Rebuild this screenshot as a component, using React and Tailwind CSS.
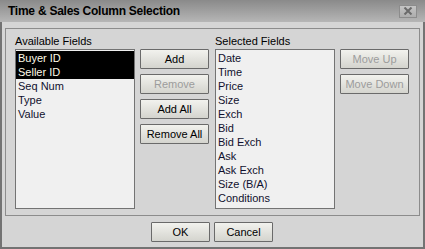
const available = ['Buyer ID', 'Seller ID', 'Seq Num', 'Type', 'Value']
const picked = ['Buyer ID', 'Seller ID']
const selected = ['Date', 'Time', 'Price', 'Size', 'Exch', 'Bid', 'Bid Exch', 'Ask', 'Ask Exch', 'Size (B/A)', 'Conditions']

function Btn({ children, disabled, className = '' }) {
  return (
    <button
      className={`h-[20px] border border-[#6a6a6a] rounded-[1px] bg-gradient-to-b from-[#f2f2ee] to-[#d4d4ce] text-[11px] leading-none ${disabled ? 'text-[#9c9c9c]' : 'text-black'} ${className}`}
    >
      {children}
    </button>
  )
}

function FieldList({ items, highlight = [] }) {
  return (
    <div className="w-[120px] h-[160px] border border-[#737373] bg-[#f0f0f0] pt-px">
      {items.map((item) => {
        const on = highlight.includes(item)
        return (
          <div
            key={item}
            className={`h-[14px] pl-[2px] text-[11px] leading-[14px] ${on ? 'bg-black text-[#fffbe8]' : 'text-[#10102e]'}`}
          >
            {item}
          </div>
        )
      })}
    </div>
  )
}

export default function App() {
  return (
    <div className="w-[425px] h-[249px] bg-[#d5d5d5] border-x-2 border-b-2 border-[#737373] flex flex-col font-['Liberation_Sans',Arial,sans-serif] select-none">
      {/* Title bar */}
      <div className="h-[22px] -mx-[2px] shrink-0 bg-gradient-to-b from-[#8a8a8a] to-[#b6b6b6] flex items-center justify-between pl-[8px] pr-[8px]">
        <span className="text-[12px] font-bold tracking-[-0.25px] text-black">Time &amp; Sales Column Selection</span>
        <div className="w-[18px] h-[13px] border border-[#8c8c8c] bg-gradient-to-b from-[#c4c4c4] to-[#adadad] flex items-center justify-center">
          <svg width="10" height="8" viewBox="0 0 10 8">
            <path d="M1.5 0.5 L8.5 7.5 M8.5 0.5 L1.5 7.5" stroke="#6a6a6a" strokeWidth="2" />
          </svg>
        </div>
      </div>

      {/* Group box */}
      <div className="mx-[3px] mt-[6px] h-[188px] border border-[#8c8c8c] pl-[9px] pt-[7px] flex gap-[5px]">
        <div className="flex flex-col">
          <div className="h-[13px] text-[11px] leading-[11px] text-black">Available Fields</div>
          <FieldList items={available} highlight={picked} />
        </div>
        <div className="pt-[13px] flex flex-col gap-[5px] w-[69px]">
          <Btn>Add</Btn>
          <Btn disabled>Remove</Btn>
          <Btn>Add All</Btn>
          <Btn>Remove All</Btn>
        </div>
        <div className="flex flex-col ml-px">
          <div className="h-[13px] text-[11px] leading-[11px] text-black">Selected Fields</div>
          <FieldList items={selected} />
        </div>
        <div className="pt-[13px] flex flex-col gap-[5px] w-[69px]">
          <Btn disabled>Move Up</Btn>
          <Btn disabled>Move Down</Btn>
        </div>
      </div>

      {/* Footer */}
      <div className="mt-[6px] flex gap-[4px] pl-[149px]">
        <Btn className="w-[59px]">OK</Btn>
        <Btn className="w-[59px]">Cancel</Btn>
      </div>
    </div>
  )
}
